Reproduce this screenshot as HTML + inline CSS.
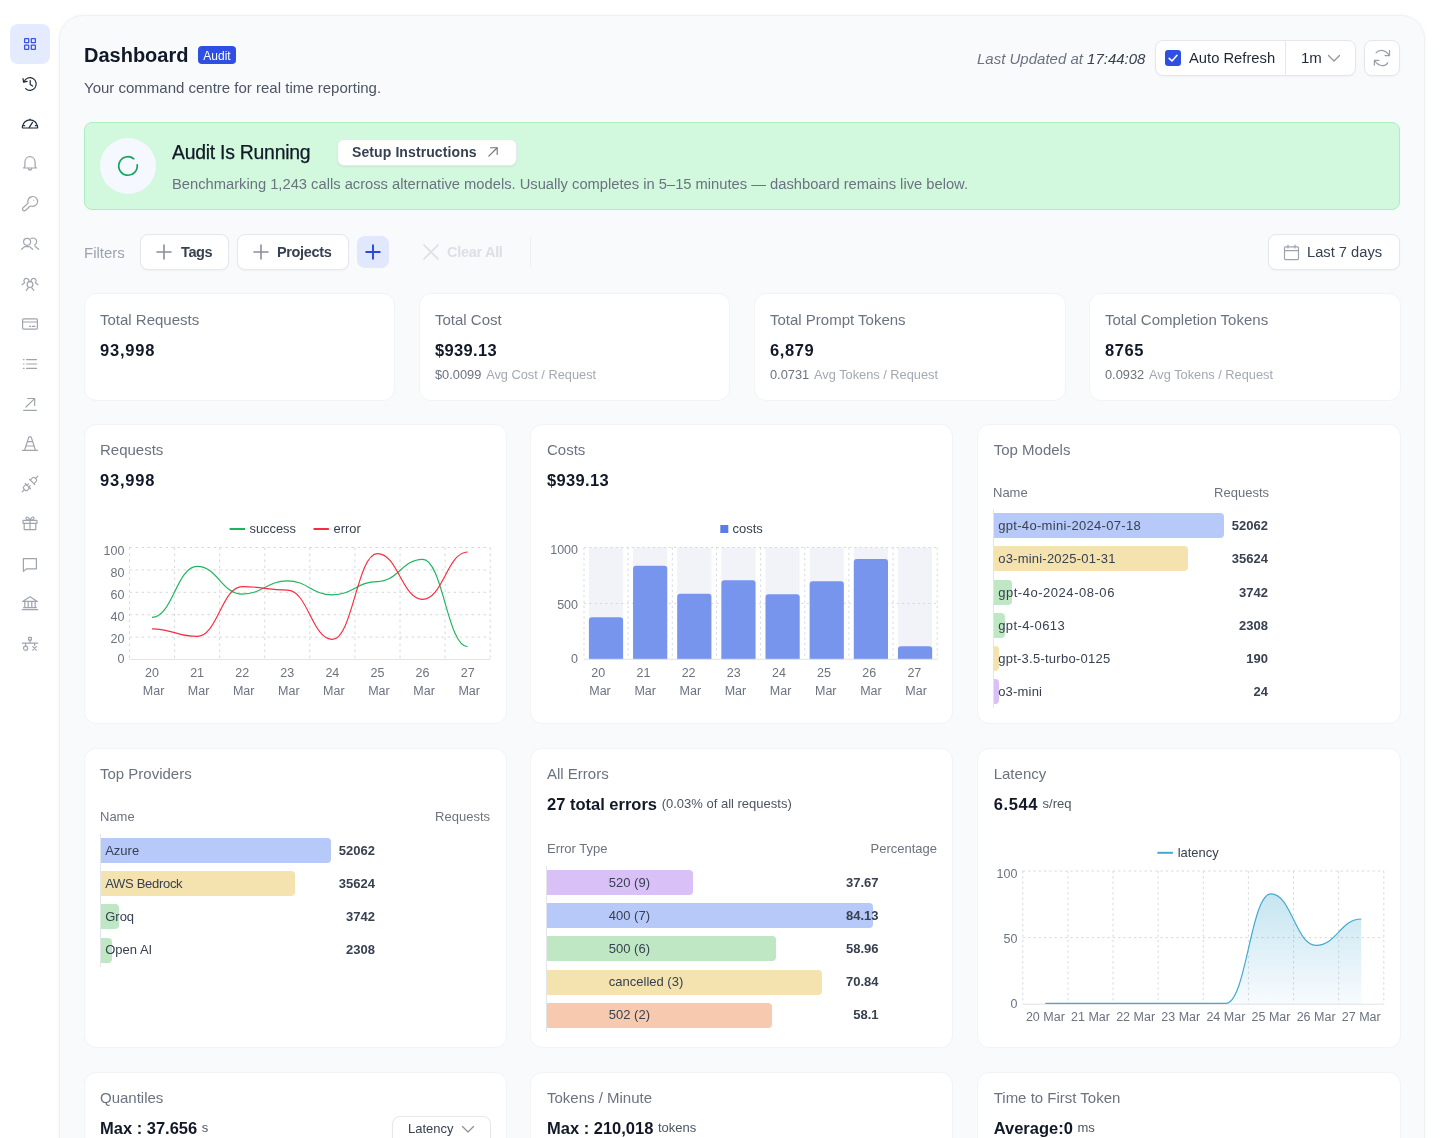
<!DOCTYPE html>
<html lang="en">
<head>
<meta charset="utf-8">
<title>Dashboard</title>
<style>
*{box-sizing:border-box;margin:0;padding:0}
html,body{width:1440px;height:1138px;overflow:hidden;background:#fff}
body{will-change:transform;font-family:"Liberation Sans",Arial,sans-serif;color:#111827;position:relative;-webkit-font-smoothing:antialiased}
.abs{position:absolute}
.sidebar{position:absolute;left:0;top:0;width:59px;height:1138px;background:#fff}
.nav{position:absolute;left:10px;width:40px;height:40px;border-radius:8px}
.nav.active{background:#e4ebfe}
.nav svg{position:absolute;left:8px;top:8px;width:24px;height:24px;overflow:visible}
.panel{position:absolute;left:59px;top:15px;width:1366px;height:1200px;background:#f9fafc;border:1px solid #eff0f3;border-radius:24px 24px 0 0;box-shadow:0 0 4px rgba(16,24,40,.04)}
.card{position:absolute;background:#fff;border:1px solid #f2f3f5;border-radius:12px}
.t{position:absolute;white-space:nowrap;line-height:1}
.g5{color:#6b7280}
.g4{color:#9ca3af}
.btn{position:absolute;background:#fff;border:1px solid #e5e7eb;border-radius:8px;box-shadow:0 1px 2px rgba(16,24,40,.04)}
svg text{font-family:"Liberation Sans",Arial,sans-serif}
</style>
</head>
<body>
<div class="sidebar">
<div class="nav active" style="top:24px"><svg viewBox="0 0 24 24" fill="none" stroke="#3355e6" stroke-width="1.25" stroke-linecap="round" stroke-linejoin="round"><rect x="6.6" y="6.5" width="4.1" height="4.1" rx=".4"/><rect x="13.3" y="6.5" width="4.1" height="4.1" rx=".4"/><rect x="6.6" y="13.2" width="4.1" height="4.1" rx=".4"/><rect x="13.3" y="13.2" width="4.1" height="4.1" rx=".4"/></svg></div>
<div class="nav" style="top:64px"><svg viewBox="0 0 24 24" fill="none" stroke="#1f2937" stroke-width="1.2" stroke-linecap="round" stroke-linejoin="round"><path d="M6.1 9.6 A6.3 6.3 0 1 1 7.6 16.6"/><path d="M5 6.6 L5.6 10.2 L9.1 9.4"/><path d="M12.2 8.6 V12.4 L14.6 14"/></svg></div>
<div class="nav" style="top:104px"><svg viewBox="0 0 24 24" fill="none" stroke="#1f2937" stroke-width="1.2" stroke-linecap="round" stroke-linejoin="round"><path d="M5 16 H19 C19.7 16 19.8 15.3 19.6 14.4 A7.7 7.7 0 0 0 4.4 14.4 C4.2 15.3 4.3 16 5 16 Z"/><path d="M11.2 15.6 L14.5 10.4"/><path d="M12 7.2 V7.8 M5.4 13.7 H6.6 M17.4 13.7 H18.6"/></svg></div>
<div class="nav" style="top:144px"><svg viewBox="0 0 24 24" fill="none" stroke="#a0a4af" stroke-width="1.2" stroke-linecap="round" stroke-linejoin="round"><path d="M6.9 14.6 V10.2 C6.9 6.6 9.4 4.7 12 4.7 C14.6 4.7 17.1 6.6 17.1 10.2 V14.6 L18.3 16 H5.7 Z"/><path d="M10.3 16.4 C10.6 18.6 13.4 18.6 13.7 16.4"/></svg></div>
<div class="nav" style="top:184px"><svg viewBox="0 0 24 24" fill="none" stroke="#a0a4af" stroke-width="1.2" stroke-linecap="round" stroke-linejoin="round"><path d="M10.1 11.1 A4.9 4.9 0 1 1 13 14 L11.4 14.5 L9.8 16.3 L7.7 18.2 C6.9 19 5.7 19 5 18.3 C4.3 17.6 4.3 16.5 5.1 15.8 Z"/><circle cx="15.8" cy="8.2" r=".5" fill="#a0a4af" stroke="none"/></svg></div>
<div class="nav" style="top:224px"><svg viewBox="0 0 24 24" fill="none" stroke="#a0a4af" stroke-width="1.2" stroke-linecap="round" stroke-linejoin="round"><circle cx="9.1" cy="9.8" r="3.5"/><path d="M3.6 17.3 L6.6 14.6 H11.6 L14.6 17.3"/><path d="M13.3 6.4 A3.5 3.5 0 0 1 16.6 13"/><path d="M17 14.2 L20.6 17.3"/></svg></div>
<div class="nav" style="top:264px"><svg viewBox="0 0 24 24" fill="none" stroke="#a0a4af" stroke-width="1.2" stroke-linecap="round" stroke-linejoin="round"><circle cx="12" cy="12.6" r="2.9"/><path d="M8.2 18.4 L10.2 16 M15.8 18.4 L13.8 16"/><path d="M6.63 10.67 A2.5 2.5 0 1 1 10.75 9.75"/><path d="M13.25 9.75 A2.5 2.5 0 1 1 17.37 10.67"/><path d="M4 12.7 L6.3 11 M20 12.7 L17.7 11"/></svg></div>
<div class="nav" style="top:304px"><svg viewBox="0 0 24 24" fill="none" stroke="#a0a4af" stroke-width="1.2" stroke-linecap="round" stroke-linejoin="round"><rect x="4.6" y="6.9" width="14.8" height="10.2" rx="1.2"/><path d="M4.6 10 H19.4"/><path d="M11.6 14.4 H12.6 M14.4 14.4 H17"/></svg></div>
<div class="nav" style="top:344px"><svg viewBox="0 0 24 24" fill="none" stroke="#a0a4af" stroke-width="1.2" stroke-linecap="round" stroke-linejoin="round"><path d="M8.6 7.6 H18.6 M8.6 12 H18.6 M8.6 16.4 H18.6"/><path d="M5.4 7.6 H6 M5.4 12 H6 M5.4 16.4 H6"/></svg></div>
<div class="nav" style="top:384px"><svg viewBox="0 0 24 24" fill="none" stroke="#a0a4af" stroke-width="1.2" stroke-linecap="round" stroke-linejoin="round"><path d="M8 15 L16.6 6.6 M9.6 6.5 H16.7 V13.4"/><path d="M5.6 18.3 H18.4"/></svg></div>
<div class="nav" style="top:424px"><svg viewBox="0 0 24 24" fill="none" stroke="#a0a4af" stroke-width="1.2" stroke-linecap="round" stroke-linejoin="round"><path d="M4.4 18.3 H19.6"/><path d="M6.6 18.2 L10.6 5.6 C10.8 5 11 4.8 11.4 4.8 H12.6 C13 4.8 13.2 5 13.4 5.6 L17.4 18.2"/><path d="M9.6 9.6 H14.4 M8.2 14 H15.8"/></svg></div>
<div class="nav" style="top:464px"><svg viewBox="0 0 24 24" fill="none" stroke="#a0a4af" stroke-width="1.15" stroke-linecap="round" stroke-linejoin="round"><g transform="rotate(-45 12 12)"><path d="M.9 12 H4.2 M19.8 12 H23.1"/><path d="M9 9.4 H6 C4.8 9.4 4.2 10.2 4.2 11 V13 C4.2 13.8 4.8 14.6 6 14.6 H9"/><path d="M9 8.2 V15.8"/><path d="M9 10.7 H11 M9 13.3 H11"/><path d="M15 9.4 H18 C19.2 9.4 19.8 10.2 19.8 11 V13 C19.8 13.8 19.2 14.6 18 14.6 H15"/><path d="M15 8.2 V15.8"/></g></svg></div>
<div class="nav" style="top:504px"><svg viewBox="0 0 24 24" fill="none" stroke="#a0a4af" stroke-width="1.2" stroke-linecap="round" stroke-linejoin="round"><rect x="5" y="8.4" width="14" height="3" rx=".4"/><path d="M6.2 11.4 V17.6 H17.8 V11.4"/><path d="M12 8.4 V17.6"/><path d="M12 8.2 C10.8 5 8.4 4.2 8 5.8 C7.6 7.6 10 8.2 12 8.2 C14 8.2 16.4 7.6 16 5.8 C15.6 4.2 13.2 5 12 8.2"/></svg></div>
<div class="nav" style="top:544px"><svg viewBox="0 0 24 24" fill="none" stroke="#a0a4af" stroke-width="1.2" stroke-linecap="round" stroke-linejoin="round"><path d="M5.4 6.6 H18.4 V16.8 H8.6 L5.4 19.4 Z"/></svg></div>
<div class="nav" style="top:584px"><svg viewBox="0 0 24 24" fill="none" stroke="#a0a4af" stroke-width="1.2" stroke-linecap="round" stroke-linejoin="round"><path d="M4.6 9.4 L12 4.8 L19.4 9.4 Z"/><path d="M6.8 10 V15.4 M10.2 10 V15.4 M13.8 10 V15.4 M17.2 10 V15.4"/><path d="M5.6 15.6 H18.4"/><path d="M4.2 17.6 H19.8"/></svg></div>
<div class="nav" style="top:624px"><svg viewBox="0 0 24 24" fill="none" stroke="#a0a4af" stroke-width="1.2" stroke-linecap="round" stroke-linejoin="round"><rect x="10.6" y="5.4" width="2.8" height="2.8" rx=".3"/><path d="M12 8.2 V11.2 M4.4 11.2 H19.6 M7.6 11.2 V13.8 M16.6 11.2 V13.4"/><circle cx="7.6" cy="16.2" r="2.1"/><path d="M14.8 14.6 L18.4 18.2 M18.4 14.6 L14.8 18.2"/></svg></div>
</div>
<div class="panel"></div>

<!-- header -->
<div class="t" id="ttl" style="left:84px;top:45px;font-size:20px;font-weight:700;color:#111827">Dashboard</div>
<div class="abs" style="left:198px;top:46px;width:38px;height:18px;border-radius:4px;background:#2f4fe2"></div>
<div class="t" id="bdg" style="left:198px;top:49.5px;width:38px;text-align:center;font-size:12px;color:#fff">Audit</div>
<div class="t" id="sub" style="left:84px;top:80px;font-size:15px;color:#4b5563">Your command centre for real time reporting.</div>

<div class="t" id="upd" style="left:977px;top:50.6px;font-size:15px;font-style:italic;color:#6b7280">Last Updated at <span style="color:#374151">17:44:08</span></div>
<div class="btn" style="left:1155px;top:40px;width:201px;height:36px"></div>
<div class="abs" style="left:1285px;top:41px;width:1px;height:34px;background:#e5e7eb"></div>
<div class="abs" style="left:1165px;top:50px;width:16px;height:16px;border-radius:3px;background:#2f4fe2"></div>
<svg class="abs" style="left:1165px;top:50px" width="16" height="16" viewBox="0 0 16 16"><path d="M4.2 8.3 L7 11 L12 5.3" fill="none" stroke="#fff" stroke-width="1.6" stroke-linecap="round" stroke-linejoin="round"/></svg>
<div class="t" id="ar" style="left:1189px;top:50.8px;font-size:14.75px;color:#1f2937">Auto Refresh</div>
<div class="t" id="m1" style="left:1301px;top:50px;font-size:15px;color:#1f2937">1m</div>
<svg class="abs" style="left:1327.3px;top:51px" width="14" height="14" viewBox="0 0 14 14"><path d="M1.5 4.5 L7 10 L12.5 4.5" fill="none" stroke="#8b909b" stroke-width="1.2" stroke-linecap="round" stroke-linejoin="round"/></svg>
<div class="btn" style="left:1364px;top:40px;width:36px;height:36px"></div>
<svg class="abs" style="left:1364px;top:40px" width="36" height="36" viewBox="0 0 36 36" fill="none" stroke="#9a9eaa" stroke-width="1.25" stroke-linecap="round" stroke-linejoin="round"><path d="M12.2 12.7 C14.5 9.6 20.5 8.6 25.2 15.1"/><path d="M25.5 10.4 V15.5 H21"/><path d="M10.8 20.9 C15.5 27.4 21.5 26.4 23.7 22.8"/><path d="M10.4 25 V20.4 H14.9"/></svg>

<!-- banner -->
<div class="abs" style="left:84px;top:122px;width:1316px;height:88px;border-radius:8px;background:#d2f9de;border:1px solid #a9efc2"></div>
<div class="abs" style="left:100px;top:138px;width:56px;height:56px;border-radius:50%;background:#f5f8ff"></div>
<svg class="abs" style="left:116px;top:153.7px" width="24" height="24" viewBox="0 0 24 24"><path d="M21.18 10.87 A9.25 9.25 0 1 1 17.7 4.71" fill="none" stroke="#16a35b" stroke-width="1.7" stroke-linecap="round"/></svg>
<div class="t" id="air" style="left:172px;top:143px;font-size:19.4px;letter-spacing:-.25px;-webkit-text-stroke:.25px #111827;color:#111827">Audit Is Running</div>
<div class="btn" style="left:336.5px;top:138.5px;width:180px;height:27px;border-radius:7px;border-color:#e6eaee;box-shadow:0 1px 2px rgba(16,24,40,.07)"></div>
<div class="t" id="si" style="left:352px;top:145px;font-size:14px;letter-spacing:.1px;font-weight:700;color:#374151">Setup Instructions</div>
<svg class="abs" style="left:487px;top:146px" width="12" height="12" viewBox="0 0 12 12" fill="none" stroke="#6b7280" stroke-width="1.1" stroke-linecap="round" stroke-linejoin="round"><path d="M1.8 10.2 L10 2"/><path d="M3.6 1.8 H10.2 V8.4"/></svg>
<div class="t" id="bench" style="left:172px;top:177.2px;font-size:14.72px;color:#6b7280">Benchmarking 1,243 calls across alternative models. Usually completes in 5–15 minutes — dashboard remains live below.</div>

<!-- filters -->
<div class="t" id="fl" style="left:84px;top:244.6px;font-size:15px;color:#9ca3af">Filters</div>
<div class="btn" style="left:140px;top:234px;width:89px;height:36px"></div>
<svg class="abs" style="left:156px;top:244px" width="16" height="16" viewBox="0 0 16 16"><path d="M8 1 V15 M1 8 H15" stroke="#8a8f9a" stroke-width="1.6" stroke-linecap="round"/></svg>
<div class="t" id="tg" style="left:181px;top:245px;font-size:14.5px;letter-spacing:-.4px;font-weight:700;color:#374151">Tags</div>
<div class="btn" style="left:237px;top:234px;width:112px;height:36px"></div>
<svg class="abs" style="left:253px;top:244px" width="16" height="16" viewBox="0 0 16 16"><path d="M8 1 V15 M1 8 H15" stroke="#8a8f9a" stroke-width="1.6" stroke-linecap="round"/></svg>
<div class="t" id="pj" style="left:277px;top:245px;font-size:14.5px;letter-spacing:-.35px;font-weight:700;color:#374151">Projects</div>
<div class="abs" style="left:357px;top:236px;width:32px;height:32px;border-radius:8px;background:#e1e8fe"></div>
<svg class="abs" style="left:365px;top:244px" width="16" height="16" viewBox="0 0 16 16"><path d="M8 1.2 V14.8 M1.2 8 H14.8" stroke="#2848de" stroke-width="1.9" stroke-linecap="round"/></svg>
<svg class="abs" style="left:423px;top:244px" width="16" height="16" viewBox="0 0 16 16"><path d="M1 1 L15 15 M15 1 L1 15" stroke="#dcdfe4" stroke-width="1.7" stroke-linecap="round"/></svg>
<div class="t" id="ca" style="left:447px;top:245px;font-size:14.5px;letter-spacing:-.3px;font-weight:700;color:#dcdfe4">Clear All</div>
<div class="abs" style="left:530px;top:238px;width:1px;height:28px;background:#eceef1"></div>
<div class="btn" style="left:1268px;top:234px;width:132px;height:36px"></div>
<svg class="abs" style="left:1283px;top:243.6px" width="17" height="17" viewBox="0 0 17 17" fill="none" stroke="#9ca3af" stroke-width="1.2" stroke-linejoin="round"><rect x="1.5" y="2.8" width="14" height="12.8" rx="1"/><path d="M1.5 6.6 H15.5 M5 1 V4 M12 1 V4" stroke-linecap="round"/></svg>
<div class="t" id="l7" style="left:1307px;top:245px;font-size:14.7px;color:#374151">Last 7 days</div>
<!-- stat cards -->
<div class="card" style="left:83.5px;top:293px;width:311.5px;height:108px"></div>
<div class="t g5" id="s1" style="left:100px;top:312px;font-size:15px">Total Requests</div>
<div class="t" id="s1v" style="left:100px;top:342px;font-size:16.5px;font-weight:700;letter-spacing:.8px">93,998</div>

<div class="card" style="left:418.5px;top:293px;width:311.5px;height:108px"></div>
<div class="t g5" id="s2" style="left:435px;top:312px;font-size:15px">Total Cost</div>
<div class="t" id="s2v" style="left:435px;top:342px;font-size:16.5px;font-weight:700;letter-spacing:.35px">$939.13</div>
<div class="t" id="s2s" style="left:435px;top:369.2px;font-size:12.8px;color:#6b7280"><span id="s2a">$0.0099</span> <span id="s2b" style="color:#a3a8b3;margin-left:1.3px">Avg Cost / Request</span></div>

<div class="card" style="left:754px;top:293px;width:311.5px;height:108px"></div>
<div class="t g5" id="s3" style="left:770px;top:312px;font-size:15px">Total Prompt Tokens</div>
<div class="t" id="s3v" style="left:770px;top:342px;font-size:16.5px;font-weight:700;letter-spacing:.6px">6,879</div>
<div class="t" id="s3s" style="left:770px;top:369.2px;font-size:12.8px;color:#6b7280"><span id="s3a">0.0731</span> <span id="s3b" style="color:#a3a8b3;margin-left:1.3px">Avg Tokens / Request</span></div>

<div class="card" style="left:1089px;top:293px;width:311.5px;height:108px"></div>
<div class="t g5" id="s4" style="left:1105px;top:312px;font-size:15px">Total Completion Tokens</div>
<div class="t" id="s4v" style="left:1105px;top:342px;font-size:16.5px;font-weight:700;letter-spacing:.55px">8765</div>
<div class="t" id="s4s" style="left:1105px;top:369.2px;font-size:12.8px;color:#6b7280"><span id="s4a">0.0932</span> <span id="s4b" style="color:#a3a8b3;margin-left:1.3px">Avg Tokens / Request</span></div>

<!-- row 2 -->
<div class="card" style="left:83.5px;top:424px;width:423px;height:300px"></div>
<div class="t g5" id="c1" style="left:100px;top:442px;font-size:15px">Requests</div>
<div class="t" id="c1v" style="left:100px;top:472px;font-size:16.5px;font-weight:700;letter-spacing:.8px">93,998</div>
<svg class="abs" style="left:84px;top:424px" width="423" height="300" viewBox="84 424 423 300">
<path d="M229.6 529 H245" stroke="#1db45d" stroke-width="2"/>
<text x="249.5" y="533.4" font-size="13" fill="#374151" textLength="46.5" lengthAdjust="spacingAndGlyphs">success</text>
<path d="M313.5 529 H328.9" stroke="#f52d42" stroke-width="2"/>
<text x="333.6" y="533.4" font-size="13" fill="#374151" textLength="27.2" lengthAdjust="spacingAndGlyphs">error</text>
<path d="M129.5 547.5H490.2M129.5 569.9H490.2M129.5 592.3H490.2M129.5 614.7H490.2M129.5 637.1H490.2M129.5 547.5V659.5M174.59 547.5V659.5M219.68 547.5V659.5M264.76 547.5V659.5M309.85 547.5V659.5M354.94 547.5V659.5M400.02 547.5V659.5M445.11 547.5V659.5M490.2 547.5V659.5" stroke="#d6d8dd" stroke-width="1" stroke-dasharray="2.6 3.4" fill="none"/>
<path d="M129.5 659.5H490.2" stroke="#e1e3e8" stroke-width="1"/>
<text x="124.4" y="555" font-size="12.5" fill="#6b7280" text-anchor="end">100</text>
<text x="124.4" y="577.4" font-size="12.5" fill="#6b7280" text-anchor="end">80</text>
<text x="124.4" y="599.1" font-size="12.5" fill="#6b7280" text-anchor="end">60</text>
<text x="124.4" y="621.1" font-size="12.5" fill="#6b7280" text-anchor="end">40</text>
<text x="124.4" y="642.7" font-size="12.5" fill="#6b7280" text-anchor="end">20</text>
<text x="124.4" y="663.1" font-size="12.5" fill="#6b7280" text-anchor="end">0</text>
<text x="152.04" y="677.3" font-size="12.5" fill="#6b7280" text-anchor="middle">20</text>
<text x="153.54" y="695.3" font-size="12.5" fill="#6b7280" text-anchor="middle">Mar</text>
<text x="197.13" y="677.3" font-size="12.5" fill="#6b7280" text-anchor="middle">21</text>
<text x="198.63" y="695.3" font-size="12.5" fill="#6b7280" text-anchor="middle">Mar</text>
<text x="242.22" y="677.3" font-size="12.5" fill="#6b7280" text-anchor="middle">22</text>
<text x="243.72" y="695.3" font-size="12.5" fill="#6b7280" text-anchor="middle">Mar</text>
<text x="287.31" y="677.3" font-size="12.5" fill="#6b7280" text-anchor="middle">23</text>
<text x="288.81" y="695.3" font-size="12.5" fill="#6b7280" text-anchor="middle">Mar</text>
<text x="332.39" y="677.3" font-size="12.5" fill="#6b7280" text-anchor="middle">24</text>
<text x="333.89" y="695.3" font-size="12.5" fill="#6b7280" text-anchor="middle">Mar</text>
<text x="377.48" y="677.3" font-size="12.5" fill="#6b7280" text-anchor="middle">25</text>
<text x="378.98" y="695.3" font-size="12.5" fill="#6b7280" text-anchor="middle">Mar</text>
<text x="422.57" y="677.3" font-size="12.5" fill="#6b7280" text-anchor="middle">26</text>
<text x="424.07" y="695.3" font-size="12.5" fill="#6b7280" text-anchor="middle">Mar</text>
<text x="467.66" y="677.3" font-size="12.5" fill="#6b7280" text-anchor="middle">27</text>
<text x="469.16" y="695.3" font-size="12.5" fill="#6b7280" text-anchor="middle">Mar</text>
<path d="M152.04,617.39C172.33,617.39,176.84,566.43,197.13,566.43C217.42,566.43,221.93,594.09,242.22,594.09C262.51,594.09,267.02,580.88,287.31,580.88C307.6,580.88,312.1,594.88,332.39,594.88C352.68,594.88,357.19,581.55,377.48,581.55C397.77,581.55,402.28,559.37,422.57,559.37C442.86,559.37,447.37,646.73,467.66,646.73" fill="none" stroke="#1db45d" stroke-width="1.15"/>
<path d="M152.04,628.81C172.33,628.81,176.84,636.43,197.13,636.43C217.42,636.43,221.93,586.59,242.22,586.59C262.51,586.59,267.02,590.06,287.31,590.06C307.6,590.06,312.1,639.34,332.39,639.34C352.68,639.34,357.19,553.55,377.48,553.55C397.77,553.55,402.28,599.36,422.57,599.36C442.86,599.36,447.37,551.98,467.66,551.98" fill="none" stroke="#f52d42" stroke-width="1.15"/>
</svg>

<div class="card" style="left:530px;top:424px;width:423px;height:300px"></div>
<div class="t g5" id="c2" style="left:547px;top:442px;font-size:15px">Costs</div>
<div class="t" id="c2v" style="left:547px;top:472px;font-size:16.5px;font-weight:700;letter-spacing:.35px">$939.13</div>
<svg class="abs" style="left:531px;top:424px" width="423" height="300" viewBox="531 424 423 300">
<rect x="720.3" y="525" width="8" height="8" fill="#5b7be8"/>
<text x="732.5" y="533.4" font-size="13" fill="#374151" textLength="30.3" lengthAdjust="spacingAndGlyphs">costs</text>
<rect x="588.9" y="547.5" width="34.2" height="111.8" fill="#f2f3f9"/>
<rect x="633.05" y="547.5" width="34.2" height="111.8" fill="#f2f3f9"/>
<rect x="677.2" y="547.5" width="34.2" height="111.8" fill="#f2f3f9"/>
<rect x="721.35" y="547.5" width="34.2" height="111.8" fill="#f2f3f9"/>
<rect x="765.5" y="547.5" width="34.2" height="111.8" fill="#f2f3f9"/>
<rect x="809.65" y="547.5" width="34.2" height="111.8" fill="#f2f3f9"/>
<rect x="853.8" y="547.5" width="34.2" height="111.8" fill="#f2f3f9"/>
<rect x="897.95" y="547.5" width="34.2" height="111.8" fill="#f2f3f9"/>
<path d="M584 547.5H937.2M584 603.4H937.2M584 547.5V659.3M628.15 547.5V659.3M672.3 547.5V659.3M716.45 547.5V659.3M760.6 547.5V659.3M804.75 547.5V659.3M848.9 547.5V659.3M893.05 547.5V659.3M937.2 547.5V659.3" stroke="#d6d8dd" stroke-width="1" stroke-dasharray="2.2 3.1" fill="none"/>
<path d="M588.9 659.3V620.15Q588.9 617.15 591.9 617.15H620.1Q623.1 617.15 623.1 620.15V659.3Z" fill="#7895ee"/>
<path d="M633.05 659.3V568.84Q633.05 565.84 636.05 565.84H664.25Q667.25 565.84 667.25 568.84V659.3Z" fill="#7895ee"/>
<path d="M677.2 659.3V596.67Q677.2 593.67 680.2 593.67H708.4Q711.4 593.67 711.4 596.67V659.3Z" fill="#7895ee"/>
<path d="M721.35 659.3V583.37Q721.35 580.37 724.35 580.37H752.55Q755.55 580.37 755.55 583.37V659.3Z" fill="#7895ee"/>
<path d="M765.5 659.3V597.34Q765.5 594.34 768.5 594.34H796.7Q799.7 594.34 799.7 597.34V659.3Z" fill="#7895ee"/>
<path d="M809.65 659.3V584.26Q809.65 581.26 812.65 581.26H840.85Q843.85 581.26 843.85 584.26V659.3Z" fill="#7895ee"/>
<path d="M853.8 659.3V561.9Q853.8 558.9 856.8 558.9H885Q888 558.9 888 561.9V659.3Z" fill="#7895ee"/>
<path d="M897.95 659.3V649.33Q897.95 646.33 900.95 646.33H929.15Q932.15 646.33 932.15 649.33V659.3Z" fill="#7895ee"/>
<path d="M584 659.3H937.2" stroke="#e1e3e8" stroke-width="1"/>
<text x="578" y="554.3" font-size="12.5" fill="#6b7280" text-anchor="end">1000</text>
<text x="578" y="608.7" font-size="12.5" fill="#6b7280" text-anchor="end">500</text>
<text x="578" y="662.8" font-size="12.5" fill="#6b7280" text-anchor="end">0</text>
<text x="598.3" y="677.3" font-size="12.5" fill="#6b7280" text-anchor="middle">20</text>
<text x="600" y="695.3" font-size="12.5" fill="#6b7280" text-anchor="middle">Mar</text>
<text x="643.45" y="677.3" font-size="12.5" fill="#6b7280" text-anchor="middle">21</text>
<text x="645.15" y="695.3" font-size="12.5" fill="#6b7280" text-anchor="middle">Mar</text>
<text x="688.6" y="677.3" font-size="12.5" fill="#6b7280" text-anchor="middle">22</text>
<text x="690.3" y="695.3" font-size="12.5" fill="#6b7280" text-anchor="middle">Mar</text>
<text x="733.75" y="677.3" font-size="12.5" fill="#6b7280" text-anchor="middle">23</text>
<text x="735.45" y="695.3" font-size="12.5" fill="#6b7280" text-anchor="middle">Mar</text>
<text x="778.9" y="677.3" font-size="12.5" fill="#6b7280" text-anchor="middle">24</text>
<text x="780.6" y="695.3" font-size="12.5" fill="#6b7280" text-anchor="middle">Mar</text>
<text x="824.05" y="677.3" font-size="12.5" fill="#6b7280" text-anchor="middle">25</text>
<text x="825.75" y="695.3" font-size="12.5" fill="#6b7280" text-anchor="middle">Mar</text>
<text x="869.2" y="677.3" font-size="12.5" fill="#6b7280" text-anchor="middle">26</text>
<text x="870.9" y="695.3" font-size="12.5" fill="#6b7280" text-anchor="middle">Mar</text>
<text x="914.35" y="677.3" font-size="12.5" fill="#6b7280" text-anchor="middle">27</text>
<text x="916.05" y="695.3" font-size="12.5" fill="#6b7280" text-anchor="middle">Mar</text>
</svg>

<div class="card" style="left:977px;top:424px;width:423.5px;height:300px"></div>
<div class="t g5" id="c3" style="left:993.7px;top:442px;font-size:15px">Top Models</div>
<div class="t g5" style="left:993px;top:486px;font-size:13px">Name</div>
<div class="t g5" style="left:1169px;width:100px;text-align:right;top:486px;font-size:13px">Requests</div>
<div class="abs" style="left:993.1px;top:509.20000000000005px;width:1px;height:199.25px;background:#e3e5ea"></div>
<div class="abs" style="left:993.6px;top:513.2px;width:230.4px;height:25px;background:#b7c9f8;border-radius:0 4px 4px 0"></div>
<div class="t" style="left:998.2px;top:519.2px;font-size:13px;letter-spacing:0.32px;color:#374151">gpt-4o-mini-2024-07-18</div>
<div class="t" style="left:1188px;width:80px;text-align:right;top:519.2px;font-size:13px;font-weight:700;color:#374151">52062</div>
<div class="abs" style="left:993.6px;top:546.45px;width:194px;height:25px;background:#f4e2af;border-radius:0 4px 4px 0"></div>
<div class="t" style="left:998.2px;top:552.45px;font-size:13px;letter-spacing:0.22px;color:#374151">o3-mini-2025-01-31</div>
<div class="t" style="left:1188px;width:80px;text-align:right;top:552.45px;font-size:13px;font-weight:700;color:#374151">35624</div>
<div class="abs" style="left:993.6px;top:579.7px;width:18.3px;height:25px;background:#bfe7c4;border-radius:0 4px 4px 0"></div>
<div class="t" style="left:998.2px;top:585.7px;font-size:13px;letter-spacing:0.53px;color:#374151">gpt-4o-2024-08-06</div>
<div class="t" style="left:1188px;width:80px;text-align:right;top:585.7px;font-size:13px;font-weight:700;color:#374151">3742</div>
<div class="abs" style="left:993.6px;top:612.95px;width:11px;height:25px;background:#bfe7c4;border-radius:0 4px 4px 0"></div>
<div class="t" style="left:998.2px;top:618.95px;font-size:13px;letter-spacing:0.4px;color:#374151">gpt-4-0613</div>
<div class="t" style="left:1188px;width:80px;text-align:right;top:618.95px;font-size:13px;font-weight:700;color:#374151">2308</div>
<div class="abs" style="left:993.6px;top:646.2px;width:5.2px;height:25px;background:#f4e2af;border-radius:0 4px 4px 0"></div>
<div class="t" style="left:998.2px;top:652.2px;font-size:13px;letter-spacing:0.25px;color:#374151">gpt-3.5-turbo-0125</div>
<div class="t" style="left:1188px;width:80px;text-align:right;top:652.2px;font-size:13px;font-weight:700;color:#374151">190</div>
<div class="abs" style="left:993.6px;top:679.45px;width:5.2px;height:25px;background:#d9c0f6;border-radius:0 4px 4px 0"></div>
<div class="t" style="left:998.2px;top:685.45px;font-size:13px;letter-spacing:0.2px;color:#374151">o3-mini</div>
<div class="t" style="left:1188px;width:80px;text-align:right;top:685.45px;font-size:13px;font-weight:700;color:#374151">24</div>

<!-- row 3 -->
<div class="card" style="left:83.5px;top:748px;width:423px;height:300px"></div>
<div class="t g5" id="c4" style="left:100px;top:766px;font-size:15px">Top Providers</div>
<div class="t g5" style="left:100px;top:810px;font-size:13px">Name</div>
<div class="t g5" style="left:390px;width:100px;text-align:right;top:810px;font-size:13px">Requests</div>
<div class="abs" style="left:100.1px;top:833.9px;width:1px;height:132.75px;background:#e3e5ea"></div>
<div class="abs" style="left:100.6px;top:837.9px;width:230.4px;height:25px;background:#b7c9f8;border-radius:0 4px 4px 0"></div>
<div class="t" style="left:105.19999999999999px;top:843.9px;font-size:13px;letter-spacing:0px;color:#374151">Azure</div>
<div class="t" style="left:295px;width:80px;text-align:right;top:843.9px;font-size:13px;font-weight:700;color:#374151">52062</div>
<div class="abs" style="left:100.6px;top:871.15px;width:194px;height:25px;background:#f4e2af;border-radius:0 4px 4px 0"></div>
<div class="t" style="left:105.19999999999999px;top:877.05px;font-size:13px;letter-spacing:-0.3px;color:#374151">AWS Bedrock</div>
<div class="t" style="left:295px;width:80px;text-align:right;top:877.05px;font-size:13px;font-weight:700;color:#374151">35624</div>
<div class="abs" style="left:100.6px;top:904.4px;width:18.3px;height:25px;background:#bfe7c4;border-radius:0 4px 4px 0"></div>
<div class="t" style="left:105.19999999999999px;top:910.2px;font-size:13px;letter-spacing:0px;color:#374151">Groq</div>
<div class="t" style="left:295px;width:80px;text-align:right;top:910.2px;font-size:13px;font-weight:700;color:#374151">3742</div>
<div class="abs" style="left:100.6px;top:937.65px;width:11px;height:25px;background:#bfe7c4;border-radius:0 4px 4px 0"></div>
<div class="t" style="left:105.19999999999999px;top:943.35px;font-size:13px;letter-spacing:0px;color:#374151">Open AI</div>
<div class="t" style="left:295px;width:80px;text-align:right;top:943.35px;font-size:13px;font-weight:700;color:#374151">2308</div>

<div class="card" style="left:530px;top:748px;width:423px;height:300px"></div>
<div class="t g5" id="c5" style="left:547px;top:766px;font-size:15px">All Errors</div>
<div class="t" id="c5v" style="left:547px;top:796px;font-size:16.5px;font-weight:700"><span id="c5a">27 total errors</span> <span id="c5b" style="letter-spacing:0;font-size:13px;font-weight:400;color:#4b5563;position:relative;top:-2px">(0.03% of all requests)</span></div>
<div class="t g5" style="left:547px;top:842px;font-size:13px">Error Type</div>
<div class="t g5" style="left:837px;width:100px;text-align:right;top:842px;font-size:13px">Percentage</div>
<div class="abs" style="left:546.1px;top:865.8px;width:1px;height:166px;background:#e3e5ea"></div>
<div class="abs" style="left:546.6px;top:869.8px;width:146.3px;height:25px;background:#d9c0f6;border-radius:0 4px 4px 0"></div>
<div class="t" style="left:608.8px;top:875.8px;font-size:13px;letter-spacing:0px;color:#374151">520 (9)</div>
<div class="t" style="left:798.5px;width:80px;text-align:right;top:875.8px;font-size:13px;font-weight:700;color:#374151">37.67</div>
<div class="abs" style="left:546.6px;top:903.05px;width:326.5px;height:25px;background:#b7c9f8;border-radius:0 4px 4px 0"></div>
<div class="t" style="left:608.8px;top:908.8px;font-size:13px;letter-spacing:0px;color:#374151">400 (7)</div>
<div class="t" style="left:798.5px;width:80px;text-align:right;top:908.8px;font-size:13px;font-weight:700;color:#374151">84.13</div>
<div class="abs" style="left:546.6px;top:936.3px;width:229px;height:25px;background:#bfe7c4;border-radius:0 4px 4px 0"></div>
<div class="t" style="left:608.8px;top:941.8px;font-size:13px;letter-spacing:0px;color:#374151">500 (6)</div>
<div class="t" style="left:798.5px;width:80px;text-align:right;top:941.8px;font-size:13px;font-weight:700;color:#374151">58.96</div>
<div class="abs" style="left:546.6px;top:969.55px;width:275.4px;height:25px;background:#f4e2af;border-radius:0 4px 4px 0"></div>
<div class="t" style="left:608.8px;top:974.8px;font-size:13px;letter-spacing:0px;color:#374151">cancelled (3)</div>
<div class="t" style="left:798.5px;width:80px;text-align:right;top:974.8px;font-size:13px;font-weight:700;color:#374151">70.84</div>
<div class="abs" style="left:546.6px;top:1002.8px;width:225.5px;height:25px;background:#f7c9ae;border-radius:0 4px 4px 0"></div>
<div class="t" style="left:608.8px;top:1007.8px;font-size:13px;letter-spacing:0px;color:#374151">502 (2)</div>
<div class="t" style="left:798.5px;width:80px;text-align:right;top:1007.8px;font-size:13px;font-weight:700;color:#374151">58.1</div>

<div class="card" style="left:977px;top:748px;width:423.5px;height:300px"></div>
<div class="t g5" id="c6" style="left:993.7px;top:766px;font-size:15px">Latency</div>
<div class="t" id="c6v" style="left:993.7px;top:796px;font-size:16.5px;font-weight:700"><span id="c6a" style="letter-spacing:.6px">6.544</span> <span id="c6b" style="font-size:13px;font-weight:400;color:#4b5563;position:relative;top:-2px">s/req</span></div>
<svg class="abs" style="left:977px;top:748px" width="423" height="300" viewBox="977 748 423 300">
<defs><linearGradient id="lg" x1="0" y1="0" x2="0" y2="1"><stop offset="0" stop-color="#41a8d0" stop-opacity=".30"/><stop offset="1" stop-color="#41a8d0" stop-opacity=".04"/></linearGradient></defs>
<path d="M1157.4 852.8 H1172.9" stroke="#41a8d0" stroke-width="2"/>
<text x="1177.7" y="857.3" font-size="13" fill="#374151" textLength="41" lengthAdjust="spacingAndGlyphs">latency</text>
<path d="M1022.8 871H1383.8M1022.8 937.6H1383.8M1022.8 871V1004.2M1067.92 871V1004.2M1113.05 871V1004.2M1158.17 871V1004.2M1203.3 871V1004.2M1248.42 871V1004.2M1293.55 871V1004.2M1338.67 871V1004.2M1383.8 871V1004.2" stroke="#d6d8dd" stroke-width="1" stroke-dasharray="2.2 3.1" fill="none"/>
<path d="M1022.8 1004.2H1383.8" stroke="#e1e3e8" stroke-width="1"/>
<text x="1017.4" y="877.8" font-size="12.5" fill="#6b7280" text-anchor="end">100</text>
<text x="1017.4" y="942.9" font-size="12.5" fill="#6b7280" text-anchor="end">50</text>
<text x="1017.4" y="1007.7" font-size="12.5" fill="#6b7280" text-anchor="end">0</text>
<text x="1045.36" y="1020.9" font-size="12.5" fill="#6b7280" text-anchor="middle">20 Mar</text>
<text x="1090.49" y="1020.9" font-size="12.5" fill="#6b7280" text-anchor="middle">21 Mar</text>
<text x="1135.61" y="1020.9" font-size="12.5" fill="#6b7280" text-anchor="middle">22 Mar</text>
<text x="1180.74" y="1020.9" font-size="12.5" fill="#6b7280" text-anchor="middle">23 Mar</text>
<text x="1225.86" y="1020.9" font-size="12.5" fill="#6b7280" text-anchor="middle">24 Mar</text>
<text x="1270.99" y="1020.9" font-size="12.5" fill="#6b7280" text-anchor="middle">25 Mar</text>
<text x="1316.11" y="1020.9" font-size="12.5" fill="#6b7280" text-anchor="middle">26 Mar</text>
<text x="1361.24" y="1020.9" font-size="12.5" fill="#6b7280" text-anchor="middle">27 Mar</text>
<path d="M1045.36,1003.4C1065.67,1003.4,1070.18,1003.4,1090.49,1003.4C1110.79,1003.4,1115.31,1003.4,1135.61,1003.4C1155.92,1003.4,1160.43,1003.4,1180.74,1003.4C1201.04,1003.4,1205.56,1003.4,1225.86,1003.4C1246.17,1003.4,1250.68,893.91,1270.99,893.91C1291.29,893.91,1295.81,945.32,1316.11,945.32C1336.42,945.32,1340.93,918.95,1361.24,918.95L1361.24,1004.2L1045.36,1004.2Z" fill="url(#lg)" stroke="none"/>
<path d="M1045.36,1003.4C1065.67,1003.4,1070.18,1003.4,1090.49,1003.4C1110.79,1003.4,1115.31,1003.4,1135.61,1003.4C1155.92,1003.4,1160.43,1003.4,1180.74,1003.4C1201.04,1003.4,1205.56,1003.4,1225.86,1003.4C1246.17,1003.4,1250.68,893.91,1270.99,893.91C1291.29,893.91,1295.81,945.32,1316.11,945.32C1336.42,945.32,1340.93,918.95,1361.24,918.95" fill="none" stroke="#41a8d0" stroke-width="1.15"/>
</svg>

<!-- row 4 -->
<div class="card" style="left:83.5px;top:1072px;width:423px;height:300px"></div>
<div class="t g5" id="c7" style="left:100px;top:1090px;font-size:15px">Quantiles</div>
<div class="t" id="c7v" style="left:100px;top:1120px;font-size:16.5px;font-weight:700"><span id="c7a">Max : 37.656</span> <span id="c7b" style="font-size:13px;font-weight:400;color:#4b5563;position:relative;top:-2px">s</span></div>
<div class="btn" style="left:392px;top:1116px;width:99px;height:30px;border-radius:8px"></div>
<div class="t" id="lt" style="left:408px;top:1122px;font-size:13px;color:#374151">Latency</div>
<svg class="abs" style="left:461px;top:1122px" width="14" height="14" viewBox="0 0 14 14"><path d="M1.5 4.5 L7 10 L12.5 4.5" fill="none" stroke="#8b909b" stroke-width="1.2" stroke-linecap="round" stroke-linejoin="round"/></svg>

<div class="card" style="left:530px;top:1072px;width:423px;height:300px"></div>
<div class="t g5" id="c8" style="left:547px;top:1090px;font-size:15px">Tokens / Minute</div>
<div class="t" id="c8v" style="left:547px;top:1120px;font-size:16.5px;font-weight:700"><span id="c8a">Max : 210,018</span> <span id="c8b" style="font-size:13px;font-weight:400;color:#4b5563;position:relative;top:-2px">tokens</span></div>

<div class="card" style="left:977px;top:1072px;width:423.5px;height:300px"></div>
<div class="t g5" id="c9" style="left:993.7px;top:1090px;font-size:15px">Time to First Token</div>
<div class="t" id="c9v" style="left:993.7px;top:1120px;font-size:16.5px;font-weight:700"><span id="c9a">Average:0</span> <span id="c9b" style="font-size:13px;font-weight:400;color:#4b5563;position:relative;top:-2px">ms</span></div>
</body>
</html>
